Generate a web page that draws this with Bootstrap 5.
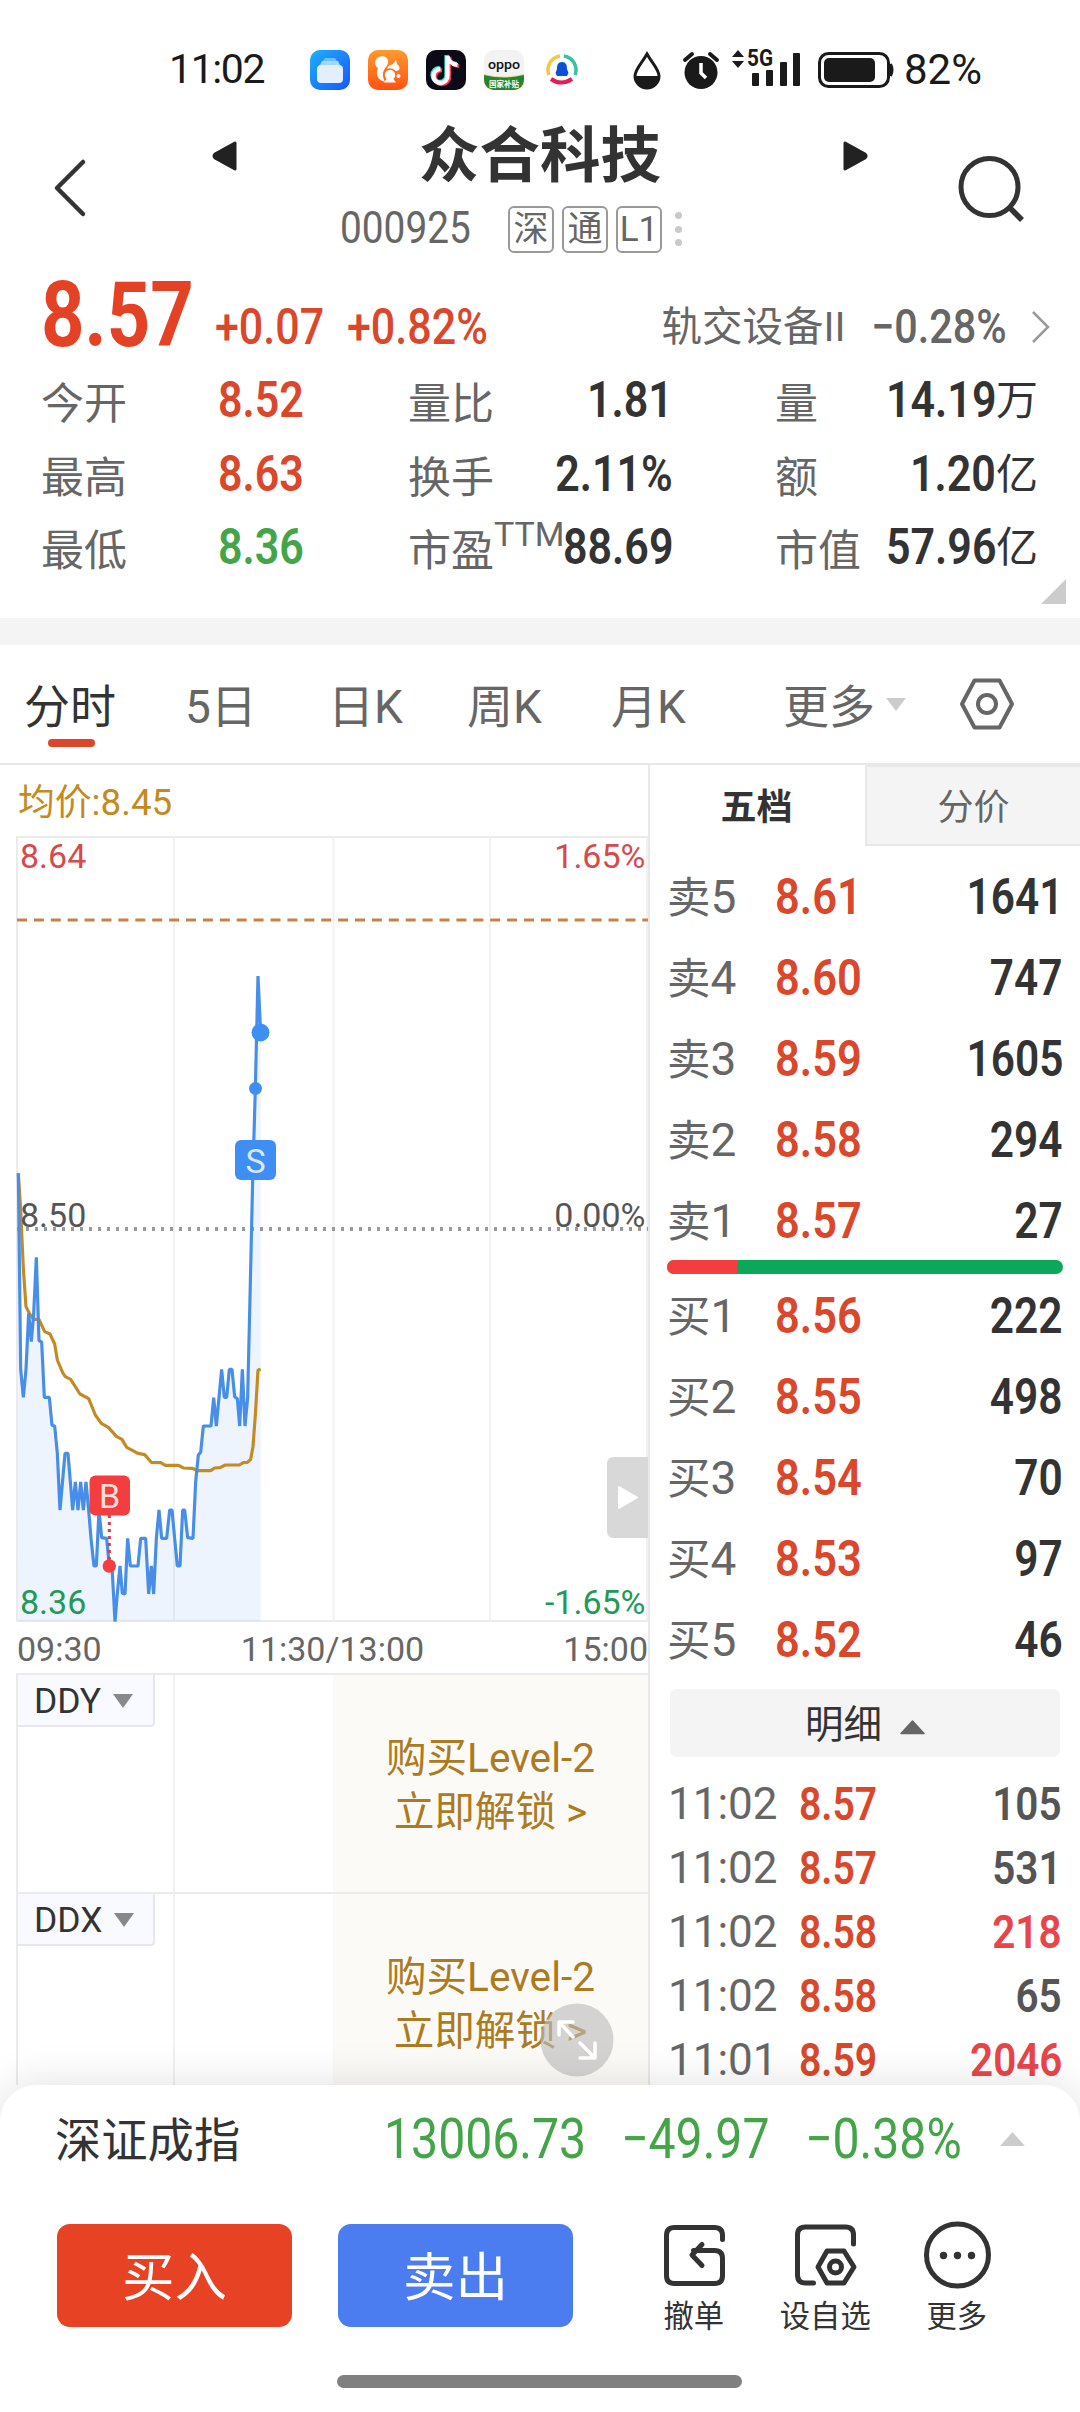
<!DOCTYPE html>
<html lang="zh-CN">
<head>
<meta charset="utf-8">
<meta name="viewport" content="width=device-width, initial-scale=1">
<title>众合科技 000925</title>
<link href="https://cdn.jsdelivr.net/npm/bootstrap@5.3.0/dist/css/bootstrap.min.css" rel="stylesheet">
<style>
:root{--up:#db472a;--down:#43a548;--ink:#333;--soft:#666}
body{width:1080px;height:2412px;overflow:hidden;background:#fff;color:var(--ink);font-family:Roboto,"Noto Sans CJK SC",sans-serif;white-space:nowrap}
svg{display:block;flex:none;overflow:visible}
.up{color:var(--up)}.down{color:var(--down)}.soft{color:var(--soft)}
.din{display:inline-block;transform:scaleX(.86);transform-origin:left center;font-weight:600}
.din-r{transform-origin:right center}
.statusbar{height:112px;padding:27px 0 0 169px;color:#1a1a1a;font-size:41px}
.clock{width:141px;letter-spacing:-1.4px}
.apps{width:320px;gap:18px}
.sysicons{width:274px}
.battery-pct{font-size:42px}
.topbar{height:150px}
.topbar .edge{width:212px}
.topbar .mid{width:656px}
.stock-name{font-size:60.5px;font-weight:700;line-height:89px;height:84px}
.code-row{height:66px;padding-left:128px}
.code-num{font-size:43.6px;width:168px;line-height:68px}
.code-num .din{font-weight:400;transform:scaleX(.89)}
.tag{width:46px;height:47px;border:2px solid #999;border-radius:6px;font-size:35px;line-height:43px;text-align:center;margin-right:8px;color:var(--soft)}
.dots{margin-left:5px}
.dots i{display:block;width:7px;height:7px;border-radius:50%;background:#c9c9c9;margin:6.7px 0}
.price-row{height:104px;padding-left:41px}
.price-now{font-size:91px;line-height:106px;width:174px;color:#e54225}
.price-now .din{font-weight:700;transform:scaleX(.835)}
.chg{font-size:50px;line-height:130px}
.chg .din{font-weight:500}
.sector{padding-right:29px}
.sector .nm{font-size:40.5px}
.sector .din{font-size:48px}
.stats{height:252px;padding-left:41px}
.stats .line{height:73.5px;line-height:77px;font-size:43px;color:var(--soft)}
.stats .din{font-size:50px;line-height:69px;vertical-align:top}
.stats .unit{font-size:42px;font-weight:400;line-height:70px;vertical-align:top;color:var(--ink)}
.stats .c1{width:367px}.stats .c1 span:first-child{width:177px}
.stats .c2{width:265px;margin-right:102px}
.stats .c3{width:263px}
.stats .ttm{font-size:34px;line-height:40px;margin-right:-30px;align-self:flex-start;margin-top:1px}
.ink{color:var(--ink)}
.corner{position:absolute;right:14px;bottom:14px}
.band{height:27px;background:#f4f4f4}
.periods{display:grid;grid-template-columns:161px 143px 139px 144px 172px 177px 1fr;height:120px;padding-left:24px;border-bottom:2px solid #e9e9e9;font-size:46px;line-height:124px;color:var(--soft)}
.periods .on{position:relative;color:var(--ink);width:92px}
.periods .on::after{content:"";position:absolute;left:24px;top:94px;width:47px;height:8px;border-radius:4px;background:var(--up)}
.board{height:1320px;overflow:hidden}
.left{width:650px;border-right:2px solid #e9e9e9}
.avg{height:71px;line-height:76px;padding-left:18px;font-size:36.8px;color:#c58a1f}
.axis{height:51px;line-height:54px;font-size:34px;padding:0 0 0 17px;color:var(--soft)}
.sub{height:219px;margin-left:16px;border-left:2px solid #ebebeb;border-top:2px solid #ebebeb}
.sub .s1{width:157px;border-right:2px solid #f1f1f1}
.sub .s2{width:158px}
.sub .s3{width:315px;background:#fbfaf6;color:#ad7a22;font-size:40.6px;line-height:54px;text-align:center;padding-top:56px}
.pick{width:137px;height:52px;border:2px solid #e8e8ea;border-top:0;border-left:0;border-radius:0 0 4px 0;background:#f9faff;font-size:35.5px;line-height:54px;padding:2px 0 0 16px;gap:12px}
.right{width:430px}
.lvtabs{height:81px;font-size:36px;line-height:86px;text-align:center}
.lvtabs .a{width:213px;margin-right:2px;font-weight:700}
.lvtabs .b{width:215px;background:#f4f4f4;border:2px solid #e8e8e8;border-right:0;color:var(--soft);line-height:82px}
.book{padding:0 17px 0 17px}
.book .q{height:81px;line-height:84px;font-size:46px;color:var(--soft)}
.book .q .nm{width:108px}.book .q .nm b{font-weight:400;font-size:43.5px}
.book .q .din{font-size:50.5px}
.book .q .din-r{transform:scaleX(.84)}
.ratio{width:396px;height:14px;margin:0 17px;border-radius:7px;background:#0ba859}
.ratio .buy{background:#f43d3e;border-radius:0}
.detail{height:68px;margin:10px 20px 14px;border-radius:7px;background:#f4f4f4;font-size:38.5px;gap:18px;line-height:72px}
.detail span{padding-top:3px}
.ticks{padding:0 18px 0 18px}
.ticks .t{height:64px;line-height:67px;font-size:44px;color:var(--soft)}
.ticks .tm{width:131px}
.ticks .p{font-size:45.5px}
.ticks .v{font-size:47px;color:#555;line-height:65px}
.ticks .hot{color:#e8454b}
.expand{position:absolute;left:540px;top:2003px}
.panel{position:relative;height:327px;border-radius:36px 36px 0 0;background:#fff;box-shadow:0 0 44px rgba(0,0,0,.13)}
.index-row{height:112px;line-height:113px;padding-left:55px;font-size:46.3px}
.index-row .nm{width:329px}
.index-row .din{font-weight:400;font-size:56px;line-height:109px}
.trade{height:140px;padding-left:57px}
.btn-trade{width:235px;height:103px;border:0;border-radius:13px;color:#fff;font-size:52.5px;line-height:108px;padding:0;margin:27px 46px 0 0}
.btn-trade:hover{color:#fff}
.buybtn{background:#e84224}.sellbtn{background:#4b7df0}
.acts{margin-left:9px}
.act{font-size:30.3px;line-height:48px;width:131.5px;padding-top:20px}
.home{width:405px;height:13px;border-radius:7px;background:#808080;margin:38px auto 0;transform:translateX(-1px)}
</style>
</head>
<body>

<div class="statusbar d-flex align-items-center">
  <div class="clock">11:02</div>
  <div class="apps d-flex align-items-center">
    <svg width="40" height="40" viewBox="0 0 40 40"><defs><linearGradient id="g1" x1="0" y1="0" x2="1" y2="1"><stop offset="0" stop-color="#1fb0fb"/><stop offset="1" stop-color="#1657fb"/></linearGradient></defs><rect width="40" height="40" rx="10" fill="url(#g1)"/><path d="M15 8h10l2 3H13z" fill="#6cc0fd"/><path d="M12 11h16l2 4H10z" fill="#a6d6fe"/><rect x="7" y="15" width="26" height="18" rx="4" fill="#e3efff"/></svg>
    <svg width="40" height="40" viewBox="0 0 40 40"><defs><linearGradient id="g2" x1="0" y1="0" x2="0" y2="1"><stop offset="0" stop-color="#ff9a2d"/><stop offset="1" stop-color="#ff5210"/></linearGradient></defs><rect width="40" height="40" rx="10" fill="url(#g2)"/><path d="M17 32C10 30 7 25 10 18 6 16 6 9 11 7c5-2 10 1 9 6-1 4-5 6-5 11 0 3 1 6 2 8z" fill="#fff"/><path d="M19 21c0-5 3-6 6-7l3-4 1 4c4 3 3 7-1 7-1 0-2 0-2 1" fill="#fff"/><circle cx="22" cy="25" r="6" fill="#fff" stroke="#ff6a18" stroke-width="1.500"/><path d="M16 32.500h12l-3-4h-6z" fill="#fff"/><circle cx="30.500" cy="26" r="2" fill="#fff"/></svg>
    <svg width="40" height="40" viewBox="0 0 40 40"><rect width="40" height="40" rx="10" fill="#0b0a16"/><g fill="none" stroke-width="4.300"><path d="M21.500 6v19.500a7 7 0 1 1-7-6.500M21.500 6c1 6 4 8 10 9" stroke="#25e3dd" transform="translate(-1 -1)"/><path d="M21.500 6v19.500a7 7 0 1 1-7-6.500M21.500 6c1 6 4 8 10 9" stroke="#f4385c" transform="translate(1.600 1.200)"/><path d="M21.500 6v19.500a7 7 0 1 1-7-6.500M21.500 6c1 6 4 8 10 9" stroke="#fff"/></g></svg>
    <svg width="40" height="40" viewBox="0 0 40 40"><defs><clipPath id="oc"><rect width="40" height="40" rx="10"/></clipPath></defs><g clip-path="url(#oc)"><rect width="40" height="40" fill="#f2f2f2"/><path d="M0 24q20 5 40 0v16H0z" fill="#e8d98a"/><path d="M0 25q20 5 40 0v15H0z" fill="#24842f"/></g><text x="4" y="18.500" font-size="12" font-weight="500" textLength="32" lengthAdjust="spacingAndGlyphs" fill="#111">oppo</text><text x="5" y="36.500" font-size="8" font-weight="700" textLength="30" lengthAdjust="spacingAndGlyphs" fill="#fff">国家补贴</text></svg>
    <svg width="40" height="40" viewBox="0 0 40 40"><g fill="none" stroke-width="3.500"><path d="M7 25A14 14 0 0 1 18 6" stroke="#f6c744"/><path d="M22 6a14 14 0 0 1 11 19" stroke="#35c3a0"/><path d="M9 29q10 7 21 0" stroke="#e01e5a" stroke-width="4"/></g><path d="M20 12c4 0 5 3 5 7l1.500 4-1.500 3H15l-1.500-3 1.500-4c0-4 1-7 5-7z" fill="#0c50d8"/></svg>
  </div>
  <svg class="sysicons" width="274" height="44" viewBox="630 47 274 44" fill="#1a1a1a"><path d="M647 53c5 9 12 15 12 22a12 12 0 0 1-24 0c0-7 7-13 12-22z" fill="none" stroke="#1a1a1a" stroke-width="3"/><path d="M635 75h24a12 12 0 0 1-24 0z"/><circle cx="701" cy="71.500" r="16.500"/><path d="M685 59l7-6M717 59l-7-6" stroke="#1a1a1a" stroke-width="4" stroke-linecap="round"/><path d="M701 62v10l5 5" fill="none" stroke="#fff" stroke-width="3.500"/><path d="M732 56l6-7 6 7zM732 60l6 7 6-7z"/><text x="747" y="65" font-size="23" font-weight="700" textLength="26" lengthAdjust="spacingAndGlyphs">5G</text><rect x="752" y="72" width="7" height="13" rx="1"/><rect x="766" y="69" width="7" height="16" rx="1"/><rect x="780" y="61" width="7" height="24" rx="1"/><rect x="793" y="52" width="7" height="33" rx="1"/><rect x="819.500" y="52.500" width="69" height="33" rx="9" fill="none" stroke="#1a1a1a" stroke-width="3"/><rect x="824" y="57" width="51" height="24" rx="5"/><path d="M891 63q3 6 0 12z" stroke="#1a1a1a" stroke-width="2"/></svg>
  <div class="battery-pct">82%</div>
</div>

<header class="topbar d-flex">
  <div class="edge d-flex align-items-center ps-5"><svg width="46" height="60" viewBox="0 0 46 60"><path d="M35 5L9 31l26 26" fill="none" stroke="#333" stroke-width="4.500" stroke-linecap="round" stroke-linejoin="round"/></svg></div>
  <div class="mid">
    <div class="d-flex justify-content-between align-items-center">
      <svg width="25" height="30" viewBox="0 0 25 30" class="mt-1"><path d="M23 2v26L3 17q-2-2 0-4z" fill="#222" stroke="#222" stroke-width="3" stroke-linejoin="round"/></svg>
      <div class="stock-name">众合科技</div>
      <svg width="25" height="30" viewBox="0 0 25 30" class="mt-1"><path d="M2 2v26l20-11q2-2 0-4z" fill="#222" stroke="#222" stroke-width="3" stroke-linejoin="round"/></svg>
    </div>
    <div class="code-row d-flex align-items-center soft">
      <div class="code-num"><span class="din">000925</span></div>
      <span class="tag">深</span><span class="tag">通</span><span class="tag">L1</span>
      <span class="dots"><i></i><i></i><i></i></span>
    </div>
  </div>
  <div class="edge d-flex align-items-center"><svg width="160" height="76" viewBox="868 149 160 76" fill="none" stroke="#333"><circle cx="989.500" cy="187" r="28.500" stroke-width="5"/><path d="M1009 207l13 13" stroke-width="5.500"/></svg></div>
</header>

<section class="price-row d-flex">
  <div class="price-now"><span class="din">8.57</span></div>
  <div class="chg up d-flex"><span class="din" style="width:132px">+0.07</span><span class="din">+0.82%</span></div>
  <div class="chg soft sector d-flex ms-auto"><span class="nm me-1">轨交设备II</span><span class="din din-r me-4">−0.28%</span><svg width="20" height="34" viewBox="0 0 20 34" style="margin-top:48px"><path d="M2 2l15 15L2 32" fill="none" stroke="#999" stroke-width="2.500"/></svg></div>
</section>

<section class="stats position-relative">
  <div class="line d-flex"><div class="c1 d-flex"><span>今开</span><span class="din up">8.52</span></div><div class="c2 d-flex justify-content-between"><span>量比</span><span class="din din-r ink">1.81</span></div><div class="c3 d-flex justify-content-between"><span>量</span><span><span class="din din-r ink">14.19</span><span class="unit">万</span></span></div></div>
  <div class="line d-flex"><div class="c1 d-flex"><span>最高</span><span class="din up">8.63</span></div><div class="c2 d-flex justify-content-between"><span>换手</span><span class="din din-r ink">2.11%</span></div><div class="c3 d-flex justify-content-between"><span>额</span><span><span class="din din-r ink">1.20</span><span class="unit">亿</span></span></div></div>
  <div class="line d-flex"><div class="c1 d-flex"><span>最低</span><span class="din down">8.36</span></div><div class="c2 d-flex justify-content-between"><span class="d-flex">市盈<span class="ttm">TTM</span></span><span class="din din-r ink">88.69</span></div><div class="c3 d-flex justify-content-between"><span>市值</span><span><span class="din din-r ink">57.96</span><span class="unit">亿</span></span></div></div>
  <svg class="corner" width="25" height="25" viewBox="0 0 25 25"><path d="M25 0v25H0z" fill="#ccc"/></svg>
</section>
<div class="band"></div>

<nav class="periods">
  <span class="on">分时</span><span>5日</span><span>日K</span><span>周K</span><span>月K</span>
  <span class="d-flex">更多<svg width="20" height="13" viewBox="0 0 20 13" style="margin:53px 0 0 11px"><path d="M0 0h20L10 13z" fill="#ccc"/></svg></span>
  <span><svg width="54" height="52" viewBox="0 0 54 52" fill="none" stroke="#666" stroke-width="4" stroke-linejoin="round" style="margin-top:33px"><path d="M14.500 2.500h25L52 26 39.500 49.500h-25L2 26z"/><circle cx="27" cy="26" r="9"/></svg></span>
</nav>

<main class="board d-flex">
  <div class="left">
    <div class="avg">均价:8.45</div>
    <svg width="648" height="786" viewBox="0 836 648 786" font-size="34">
      <g stroke="#ebebeb" stroke-width="2" fill="none"><path d="M17 1622V837H648M17 1621H648"/><path stroke="#f1f1f1" d="M174 837V1621M333.500 837V1621M490 837V1621M647 837V1621"/></g>
      <path fill="#4b94ee" fill-opacity=".1" id="area"/>
      <path d="M17 920H648" stroke="#c98043" stroke-width="3" stroke-dasharray="10 6.900"/>
      <path d="M17 1229H648" stroke="#999" stroke-width="4" stroke-dasharray="3 6"/>
      <g transform="translate(0 1150) scale(.33333)" fill="none" stroke-width="9.500" stroke-linejoin="bevel">
        <polyline stroke="#c58a24" points="55,70 62,180 70,355 78,470 88,490 101,508 117,508 134,545 150,552 164,582 172,630 188,668 196,680 212,688 240,732 266,746 286,795 304,820 325,832 350,860 366,868 380,892 414,910 434,914 454,937 482,938 496,946 536,946 550,954 578,955 592,962 632,962 644,954 660,953 676,945 718,945 730,938 742,937 752,928 759,890 766,795 774,660 782,658"/>
        <polyline id="price" stroke="#478ee8" points="55,70 62,658 70,742 78,658 86,490 94,575 101,490 109,322 117,572 125,576 133,742 148,742 156,826 164,828 172,910 180,1080 188,990 195,910 204,910 211,995 218,1080 226,996 234,1080 242,996 250,1080 258,996 266,1080 273,1165 282,1248 289,1248 297,1080 305,1163 320,1165 328,1248 336,1250 345,1415 352,1330 360,1248 367,1330 375,1332 383,1165 391,1248 414,1248 422,1165 437,1165 446,1332 454,1248 461,1332 469,1165 477,1080 485,1165 500,1165 509,1080 516,1080 524,1165 532,1248 540,1248 548,1080 554,1080 563,1163 579,1165 587,995 595,915 602,907 610,828 633,828 641,743 649,828 657,742 665,658 673,742 680,742 688,658 696,658 704,740 712,746 719,828 727,658 735,828 743,742 751,400 758,90 766,-184 774,-522 782,-352"/>
      </g>
      <circle cx="260.500" cy="1032.500" r="9" fill="#3f8ef4"/><circle cx="255.500" cy="1088.500" r="6.500" fill="#3f8ef4"/>
      <rect x="235" y="1140" width="41" height="40" rx="6" fill="#3f8ef4"/><text x="255.500" y="1173" text-anchor="middle" fill="#d9e8fd">S</text>
      <path d="M109.300 1515v50" stroke="#d83a48" stroke-width="3" stroke-dasharray="3 4"/><circle cx="109.300" cy="1566" r="6.700" fill="#f43d3e"/>
      <rect x="89.500" y="1475.500" width="40.500" height="40" rx="6" fill="#f43d3e"/><text x="109.700" y="1508" text-anchor="middle" fill="#fddcdc">B</text>
      <text x="20" y="868" fill="#d64a4a">8.64</text><text x="645.500" y="868" text-anchor="end" fill="#d64a4a">1.65%</text>
      <text x="20" y="1227" fill="#555">8.50</text><text x="645.500" y="1227" text-anchor="end" fill="#555">0.00%</text>
      <text x="20" y="1614" fill="#219a57">8.36</text><text x="645.500" y="1614" text-anchor="end" fill="#219a57">-1.65%</text>
      <path d="M648 1457h-34q-7 0-7 7v67q0 7 7 7h34z" fill="#d8d8d8"/><path d="M619 1487v21l18-10.500z" fill="#fff" stroke="#fff" stroke-width="2" stroke-linejoin="round"/>
    </svg>
    <div class="axis d-flex justify-content-between"><span>09:30</span><span>11:30/13:00</span><span>15:00</span></div>
    <div class="sub d-flex"><div class="s1"><div class="pick d-flex align-items-center">DDY<svg width="20" height="14" viewBox="0 0 20 14"><path d="M0 0h20L10 14z" fill="#888"/></svg></div></div><div class="s2"></div><div class="s3">购买Level-2<br>立即解锁 &gt;</div></div>
    <div class="sub d-flex"><div class="s1"><div class="pick d-flex align-items-center">DDX<svg width="20" height="14" viewBox="0 0 20 14"><path d="M0 0h20L10 14z" fill="#888"/></svg></div></div><div class="s2"></div><div class="s3">购买Level-2<br>立即解锁 &gt;</div></div>
  </div>

  <div class="right">
    <div class="lvtabs d-flex"><div class="a">五档</div><div class="b">分价</div></div>
    <div class="book" style="padding-top:9px">
      <div class="q d-flex"><span class="nm"><b>卖</b>5</span><span class="din up">8.61</span><span class="din din-r ink ms-auto">1641</span></div>
      <div class="q d-flex"><span class="nm"><b>卖</b>4</span><span class="din up">8.60</span><span class="din din-r ink ms-auto">747</span></div>
      <div class="q d-flex"><span class="nm"><b>卖</b>3</span><span class="din up">8.59</span><span class="din din-r ink ms-auto">1605</span></div>
      <div class="q d-flex"><span class="nm"><b>卖</b>2</span><span class="din up">8.58</span><span class="din din-r ink ms-auto">294</span></div>
      <div class="q d-flex"><span class="nm"><b>卖</b>1</span><span class="din up">8.57</span><span class="din din-r ink ms-auto">27</span></div>
    </div>
    <div class="progress ratio"><div class="progress-bar buy" style="width:17.7%"></div></div>
    <div class="book">
      <div class="q d-flex"><span class="nm"><b>买</b>1</span><span class="din up">8.56</span><span class="din din-r ink ms-auto">222</span></div>
      <div class="q d-flex"><span class="nm"><b>买</b>2</span><span class="din up">8.55</span><span class="din din-r ink ms-auto">498</span></div>
      <div class="q d-flex"><span class="nm"><b>买</b>3</span><span class="din up">8.54</span><span class="din din-r ink ms-auto">70</span></div>
      <div class="q d-flex"><span class="nm"><b>买</b>4</span><span class="din up">8.53</span><span class="din din-r ink ms-auto">97</span></div>
      <div class="q d-flex"><span class="nm"><b>买</b>5</span><span class="din up">8.52</span><span class="din din-r ink ms-auto">46</span></div>
    </div>
    <div class="detail d-flex align-items-center justify-content-center"><span>明细</span><svg width="25" height="15" viewBox="0 0 25 15" class="mt-2"><path d="M12.500 1L24 13.500H1z" fill="#666" stroke="#666" stroke-width="1.500" stroke-linejoin="round"/></svg></div>
    <div class="ticks">
      <div class="t d-flex"><span class="tm">11:02</span><span class="din p up">8.57</span><span class="din din-r v ms-auto">105</span></div>
      <div class="t d-flex"><span class="tm">11:02</span><span class="din p up">8.57</span><span class="din din-r v ms-auto">531</span></div>
      <div class="t d-flex"><span class="tm">11:02</span><span class="din p up">8.58</span><span class="din din-r v hot ms-auto">218</span></div>
      <div class="t d-flex"><span class="tm">11:02</span><span class="din p up">8.58</span><span class="din din-r v ms-auto">65</span></div>
      <div class="t d-flex"><span class="tm">11:01</span><span class="din p up">8.59</span><span class="din din-r v hot ms-auto">2046</span></div>
    </div>
  </div>
</main>
<svg class="expand" width="74" height="74" viewBox="0 0 74 74"><circle cx="37" cy="37" r="36.500" fill="#bbb" fill-opacity=".62"/><g fill="none" stroke="#fff" stroke-width="3.500" stroke-linecap="round" stroke-linejoin="round"><path d="M19 32V19h14M20 20l13 14M55 40v15H40M53 53L40 40"/></g></svg>

<footer class="panel">
  <div class="index-row d-flex"><span class="nm">深证成指</span><span class="down d-flex"><span class="din" style="width:237px">13006.73</span><span class="din" style="width:184px">−49.97</span><span class="din" style="width:195px">−0.38%</span></span><svg width="25" height="14" viewBox="0 0 25 14" style="margin-top:47px"><path d="M12.500 0L25 14H0z" fill="#ccc"/></svg></div>
  <div class="trade d-flex">
    <button class="btn btn-trade buybtn">买入</button>
    <button class="btn btn-trade sellbtn">卖出</button>
    <div class="acts d-flex">
    <div class="act text-center">
      <svg class="mx-auto" width="72" height="76" viewBox="658 2217 72 76" fill="none" stroke="#333" stroke-width="5" stroke-linecap="round" stroke-linejoin="round"><path d="M722.500 2239v-4q0-8-8-8h-40q-8 0-8 8v40q0 8 8 8h40q8 0 8-8v-17q0-8-8-8h-21M702 2244l-10 10.500L702 2265" transform="translate(0 .5)"/></svg>
      <div>撤单</div></div>
    <div class="act text-center">
      <svg class="mx-auto" width="72" height="76" viewBox="789 2217 72 76" fill="none" stroke="#333" stroke-width="5" stroke-linecap="round" stroke-linejoin="round"><path d="M853.500 2244v-9q0-8-8-8h-40q-8 0-8 8v40q0 8 8 8h8M827 2251h17l10 16-10 16h-17l-9-16z"/><circle cx="835.500" cy="2267" r="6"/></svg>
      <div>设自选</div></div>
    <div class="act text-center">
      <svg class="mx-auto" width="72" height="76" viewBox="921 2217 72 76"><circle cx="957.500" cy="2255" r="31" fill="none" stroke="#333" stroke-width="5"/><g fill="#333"><circle cx="943.500" cy="2255.500" r="3.700"/><circle cx="957.500" cy="2255.500" r="3.700"/><circle cx="971.500" cy="2255.500" r="3.700"/></g></svg>
      <div>更多</div></div>
    </div>
  </div>
  <div class="home"></div>
</footer>

<script src="https://cdn.jsdelivr.net/npm/bootstrap@5.3.0/dist/js/bootstrap.bundle.min.js"></script>
<script>
// Shade the area between the price line and the bottom of the chart.
const pts = document.getElementById('price').getAttribute('points').split(' ')
  .map(p => p.split(',').map(Number)).map(([x, y]) => [(x / 3).toFixed(1), (1150 + y / 3).toFixed(1)]);
document.getElementById('area').setAttribute('d', 'M' + pts.map(p => p.join(' ')).join('L') + 'V1621H18Z');
</script>
</body>
</html>
